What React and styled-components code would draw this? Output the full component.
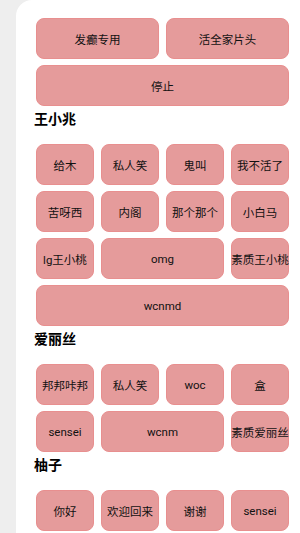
import styled, { createGlobalStyle } from "styled-components";

const GlobalStyle = createGlobalStyle`
  html, body {
    margin: 0;
    padding: 0;
    background: #eeeeee;
    font-family: Roboto, "Noto Sans CJK SC", sans-serif;
  }
`;

const Page = styled.div`
  padding-left: 16px;
`;

const Panel = styled.div`
  min-height: 533px;
  background: #ffffff;
  border-top-left-radius: 16px;
  padding: 18px 11px 0 18px;
  box-sizing: border-box;
`;

const Grid = styled.div`
  display: grid;
  grid-template-columns: repeat(4, minmax(0, 1fr));
  column-gap: 7px;
  row-gap: 6px;
  margin-left: 2px;
`;

const Sound = styled.button`
  grid-column: span ${(p) => p.span || 1};
  display: flex;
  align-items: center;
  justify-content: center;
  min-width: 0;
  height: 41px;
  padding: 0;
  border: 1px solid #e88f8f;
  border-radius: 8px;
  background: #e59b9b;
  color: #111111;
  font-family: Roboto, "Noto Sans CJK SC", sans-serif;
  font-size: 11.5px;
  white-space: nowrap;
  overflow: visible;
  cursor: pointer;
`;

const Title = styled.div`
  margin: 3px 0 15px;
  font-size: 14px;
  line-height: 20px;
  font-weight: bold;
  color: #000000;
`;

const sections = [
  {
    items: [
      { label: "发癫专用", span: 2 },
      { label: "活全家片头", span: 2 },
      { label: "停止", span: 4 },
    ],
  },
  {
    title: "王小兆",
    items: [
      { label: "给木" },
      { label: "私人笑" },
      { label: "鬼叫" },
      { label: "我不活了" },
      { label: "苦呀西" },
      { label: "内阁" },
      { label: "那个那个" },
      { label: "小白马" },
      { label: "lg王小桃" },
      { label: "omg", span: 2 },
      { label: "素质王小桃" },
      { label: "wcnmd", span: 4 },
    ],
  },
  {
    title: "爱丽丝",
    items: [
      { label: "邦邦咔邦" },
      { label: "私人笑" },
      { label: "woc" },
      { label: "盒" },
      { label: "sensei" },
      { label: "wcnm", span: 2 },
      { label: "素质爱丽丝" },
    ],
  },
  {
    title: "柚子",
    items: [
      { label: "你好" },
      { label: "欢迎回来" },
      { label: "谢谢" },
      { label: "sensei" },
    ],
  },
];

const App = () => {
  return (
    <Page>
      <GlobalStyle />
      <Panel>
        {sections.map((section, i) => (
          <div key={i}>
            {section.title && <Title>{section.title}</Title>}
            <Grid>
              {section.items.map((item, j) => (
                <Sound key={j} span={item.span}>
                  {item.label}
                </Sound>
              ))}
            </Grid>
          </div>
        ))}
      </Panel>
    </Page>
  );
};

export default App;
